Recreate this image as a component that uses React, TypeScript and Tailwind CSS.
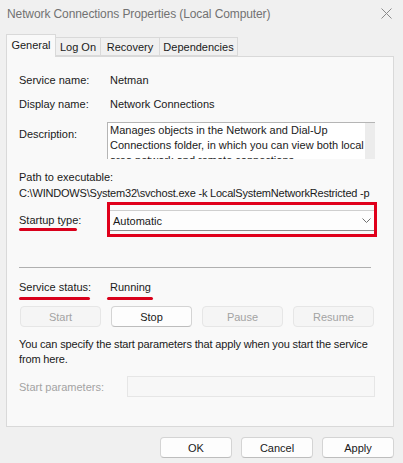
const tabs = [
  { name: 'General', w: 'w-[50px]', active: true },
  { name: 'Log On', w: 'w-[45px]', active: false },
  { name: 'Recovery', w: 'w-[59px]', active: false },
  { name: 'Dependencies', w: 'w-[78px]', active: false },
];

function Btn({ label, disabled, w = 'w-[81px]' }: { label: string; disabled?: boolean; w?: string }) {
  return (
    <div
      className={
        w +
        ' h-[21px] rounded-[4px] border flex items-center justify-center ' +
        (disabled
          ? 'bg-[#f5f5f5] border-[#e6e6e6] text-[#a3a3a3]'
          : 'bg-[#fdfdfd] border-[#d4d4d4] border-b-[#bdbdbd] text-[#1a1a1a]')
      }
    >
      {label}
    </div>
  );
}

export default function App() {
  return (
    <div className="w-[403px] h-[463px] overflow-hidden bg-[#f0f0f0] text-[11px] leading-[16px] text-[#1a1a1a] font-['Liberation_Sans',Arial,sans-serif] flex flex-col">
      {/* Title bar */}
      <div className="h-[28px] flex items-center justify-between pl-[7px] pr-[11px]">
        <span className="text-[12px] tracking-[-0.1px] text-[#727272]">Network Connections Properties (Local Computer)</span>
        <svg width="11" height="11" viewBox="0 0 11 11" className="mt-[-1px]">
          <path d="M0.5 0.5 L10.5 10.5 M10.5 0.5 L0.5 10.5" stroke="#8a8a8a" strokeWidth="1" fill="none" />
        </svg>
      </div>

      {/* Tabs */}
      <div className="mt-[6px] pl-[6px] flex items-end h-[22px]">
        {tabs.map((t, i) =>
          t.active ? (
            <div
              key={t.name}
              className={t.w + ' h-[23px] -mb-px relative z-10 border border-b-0 border-[#d9d9d9] bg-[#f9f9f9] flex items-center justify-center pb-[2px]'}
            >
              {t.name}
            </div>
          ) : (
            <div
              key={t.name}
              className={
                t.w +
                ' h-[19px] border border-[#d9d9d9] bg-[#f0f0f0] flex items-center justify-center ' +
                (i > 0 ? 'border-l-0' : '')
              }
            >
              {t.name}
            </div>
          )
        )}
      </div>

      {/* Panel */}
      <div className="ml-[6px] mr-[9px] h-[371px] border border-[#d9d9d9] bg-[#f9f9f9] pl-[12px] pr-[18px] pt-[15px] flex flex-col">
        <div className="flex h-[16px]">
          <span className="w-[91px]">Service name:</span>
          <span>Netman</span>
        </div>
        <div className="flex h-[16px] mt-[8px]">
          <span className="w-[91px]">Display name:</span>
          <span>Network Connections</span>
        </div>

        <div className="flex mt-[10px]">
          <span className="w-[88px] pt-[4px]">Description:</span>
          <div className="flex-1 h-[37px] overflow-hidden border-t border-l border-[#b5b5b5] bg-white flex">
            <div className="flex-1 pl-[2px] leading-[15px]">
              Manages objects in the Network and Dial-Up Connections folder, in which you can view both local area network and remote connections.
            </div>
            <div className="w-[10px] bg-[#ececec]" />
          </div>
        </div>

        <div className="mt-[10px] h-[16px]">Path to executable:</div>
        <div className="h-[17px] whitespace-nowrap overflow-hidden tracking-[-0.2px]">
          C:\WINDOWS\System32\svchost.exe -k LocalSystemNetworkRestricted -p
        </div>

        <div className="flex">
          <div className="w-[88px] pt-[10px] flex flex-col">
            <span className="h-[16px]">Startup type:</span>
            <div className="w-[58px] h-[3px] rounded-full bg-[#d9001b]" />
          </div>
          <div className="flex-1 -mr-[2px] h-[35px] border-[3px] border-[#e0001b] pt-[5px]">
            <div className="h-[21px] bg-[#fdfdfd] border-t border-b border-[#cfcfcf] border-b-[#8f8f8f] flex items-center justify-between pl-[3px] pr-[3px]">
              <span>Automatic</span>
              <svg width="9" height="5" viewBox="0 0 9 5">
                <path d="M0.5 0.5 L4.5 4.5 L8.5 0.5" stroke="#707070" strokeWidth="1" fill="none" />
              </svg>
            </div>
          </div>
        </div>

        <div className="mt-[30px] h-px bg-[#b0b0b0] mr-[4px]" />

        <div className="flex mt-[11px]">
          <div className="w-[88px] flex flex-col">
            <span className="h-[16px]">Service status:</span>
            <div className="w-[71px] h-[3px] mt-[2px] rounded-full bg-[#d9001b]" />
          </div>
          <div className="flex flex-col">
            <span className="h-[16px] pl-[3px]">Running</span>
            <div className="w-[46px] h-[3px] mt-[2px] rounded-full bg-[#d9001b]" />
          </div>
        </div>

        <div className="flex gap-[10px] mt-[6px] pl-px">
          <Btn label="Start" disabled />
          <Btn label="Stop" />
          <Btn label="Pause" disabled />
          <Btn label="Resume" disabled />
        </div>

        <div className="mt-[10px] leading-[15px] -mr-[6px] tracking-[-0.15px]">
          You can specify the start parameters that apply when you start the service from here.
        </div>

        <div className="flex items-center mt-[9px]">
          <span className="w-[108px] text-[#a3a3a3]">Start parameters:</span>
          <div className="flex-1 h-[21px] border border-[#e6e6e6] bg-[#f7f7f7]" />
        </div>
      </div>

      {/* Footer */}
      <div className="flex justify-end gap-[9px] pr-[9px] mt-[10px]">
        <Btn label="OK" w="w-[72px]" />
        <Btn label="Cancel" w="w-[72px]" />
        <Btn label="Apply" w="w-[72px]" />
      </div>
    </div>
  );
}
